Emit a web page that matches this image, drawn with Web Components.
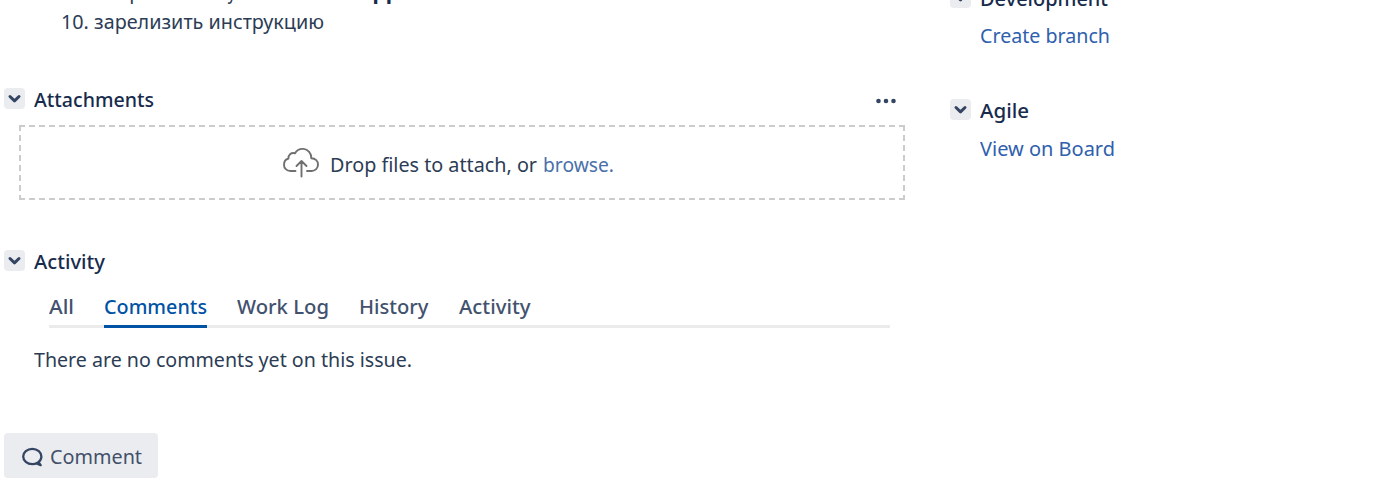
<!DOCTYPE html>
<html lang="en"><head><meta charset="utf-8"><title>Issue</title>
<style>
html,body{margin:0;height:100%;overflow:hidden;background:#fff}
body{font:400 20.5px/30px "Noto Sans","Open Sans",sans-serif;color:#2c3c55}
</style></head><body>
<issue-page></issue-page>
<script>
const define=(name,html,setup)=>customElements.define(name,class extends HTMLElement{
  constructor(){super();this.attachShadow({mode:'open'}).innerHTML=html;}
  connectedCallback(){if(setup)setup(this,this.shadowRoot);}
});
define('fit-text',`<style>:host{display:block;height:30px;white-space:nowrap;flex:none}span{display:inline-block;transform-origin:0 50%}</style><span><slot></slot></span>`,(el,r)=>{
  const s=r.querySelector('span'),w=+el.getAttribute('w');
  el.style.width=w+'px';
  const n=s.getBoundingClientRect().width;
  if(n)s.style.transform=`scaleX(${w/n})`;
});
define('twixie-button',`<style>:host{display:block;width:21px;height:21px;border-radius:4px;background:#ebecf0;flex:none}svg{display:block}</style>
<svg width="21" height="21" viewBox="0 0 21 21" fill="none" stroke="#344563" stroke-width="3" stroke-linecap="round" stroke-linejoin="round"><path d="M6 8.500l4.500 4.300L15 8.500"/></svg>`);
define('module-heading',`<style>:host{display:flex;height:30px;font-weight:500;line-height:28px;color:#172b4d}twixie-button{margin:3px 9px 0 4px}</style><twixie-button></twixie-button><slot></slot>`);
define('cloud-icon',`<style>:host{display:block;width:38px;height:32px;flex:none}svg{display:block}</style>
<svg width="38" height="32" viewBox="0 0 38 32" fill="none" stroke="#707070" stroke-width="1.900" stroke-linecap="round" stroke-linejoin="round"><path d="M13.500 24H8.500C4.500 24 2 21.200 2 17.700C2 14.700 3.700 12.300 6.500 11.500C6 8 9 5.300 13 6.300C15 2.700 18 1.600 21.500 1.900C26 2.300 29.500 6.200 29.300 11.300C33.500 11.400 36 14.200 36 17.500C36 21.200 33.300 24 29.500 24H25M19.500 29.500V14M14.500 19L19.500 14L24.500 19"/></svg>`);
define('more-icon',`<style>:host{display:block}svg{display:block}</style><svg width="20" height="6" fill="#344563"><circle cx="2.500" cy="3" r="2.300"/><circle cx="10" cy="3" r="2.300"/><circle cx="17.500" cy="3" r="2.300"/></svg>`);
define('drop-zone',`<style>:host{display:block;width:886px;height:75px;margin:10px 0 0 19px;position:relative}
.border{position:absolute;inset:0}.row{display:flex;height:75px;align-items:center;padding-left:263px;box-sizing:border-box}.t{display:flex;line-height:28px;margin:4px 0 0 10px}.b{color:#4a70aa;margin-left:6px}</style>
<svg class="border" width="886" height="75" fill="none" stroke="#ccc" stroke-width="2" stroke-dasharray="6 4"><path d="M0 1H886M0 74H886M1 0V75M885 0V75"/></svg>
<div class="row"><cloud-icon></cloud-icon><div class="t"><fit-text w="207">Drop files to attach, or</fit-text><fit-text class="b" w="71">browse.</fit-text></div></div>`);
define('activity-tabs',`<style>:host{display:flex;box-sizing:border-box;width:841px;height:37px;margin:14px 0 0 49px;gap:30px;box-shadow:inset 0 -3px #ebebeb;font-weight:500;color:#42526e}
fit-text{height:37px}.on{color:#0052a5;box-shadow:inset 0 -3px #0052a5}</style>
<fit-text w="25">All</fit-text><fit-text class="on" w="103">Comments</fit-text><fit-text w="92">Work Log</fit-text><fit-text w="69.500">History</fit-text><fit-text w="71.500">Activity</fit-text>`);
define('comment-button',`<style>:host{display:flex;width:154px;height:45px;box-sizing:border-box;margin:59px 0 0 4px;padding:9px 0 0 17px;border-radius:4px;background:#ebecf0;color:#42506a;line-height:28px}svg{flex:none;margin:4px 6px 0 0}</style>
<svg width="23" height="22" fill="none" stroke="#344563" stroke-width="2.300"><path d="M16.500 16.800C15 17.700 13.200 18.200 11.300 18.200C6.100 18.200 2.200 14.700 2.200 10.500S6.100 2.800 11.300 2.800S20.400 6.300 20.400 10.500C20.400 12.700 19.300 14.700 17.500 16.200L19.700 19.200L15.500 17.500" stroke-linejoin="round" stroke-linecap="round"/></svg><fit-text w="92">Comment</fit-text>`);
define('issue-page',`<style>:host{display:grid;grid-template-columns:905px 1fr;column-gap:41px;width:1397px;height:485px;overflow:hidden}
main,aside{min-width:0}.steps{margin-top:-24px;height:61px;padding-left:61px}.step{display:flex}.prev{padding-left:11px;gap:6px}.app{margin-left:46px;color:#172b4d}
.attach{display:flex;justify-content:space-between;margin-top:48px}more-icon{margin:13px 9.500px 0 0}
.activity{margin-top:47px}.empty{margin:16px 0 0 34px}
.agile{margin-top:45px}.dev{margin-top:-16px}.link{margin:7px 0 0 34px;color:#2e60ad;line-height:28px}.agile+.link{margin-top:8px}b{font-weight:700}</style>
<main><div class="steps"><div class="step prev"><fit-text w="116">9. смержить</fit-text><fit-text w="42">ветку</fit-text><fit-text w="64">в новый</fit-text><fit-text class="app" w="41"><b>App</b></fit-text></div><div class="step"><fit-text w="263">10. зарелизить инструкцию</fit-text></div></div>
<div class="attach"><module-heading><fit-text w="120">Attachments</fit-text></module-heading><more-icon></more-icon></div>
<drop-zone></drop-zone>
<module-heading class="activity"><fit-text w="71">Activity</fit-text></module-heading>
<activity-tabs></activity-tabs>
<fit-text class="empty" w="378">There are no comments yet on this issue.</fit-text>
<comment-button></comment-button></main>
<aside><module-heading class="dev"><fit-text w="128">Development</fit-text></module-heading><fit-text class="link" w="130">Create branch</fit-text>
<module-heading class="agile"><fit-text w="49">Agile</fit-text></module-heading><fit-text class="link" w="135">View on Board</fit-text></aside>`);
</script></body></html>
